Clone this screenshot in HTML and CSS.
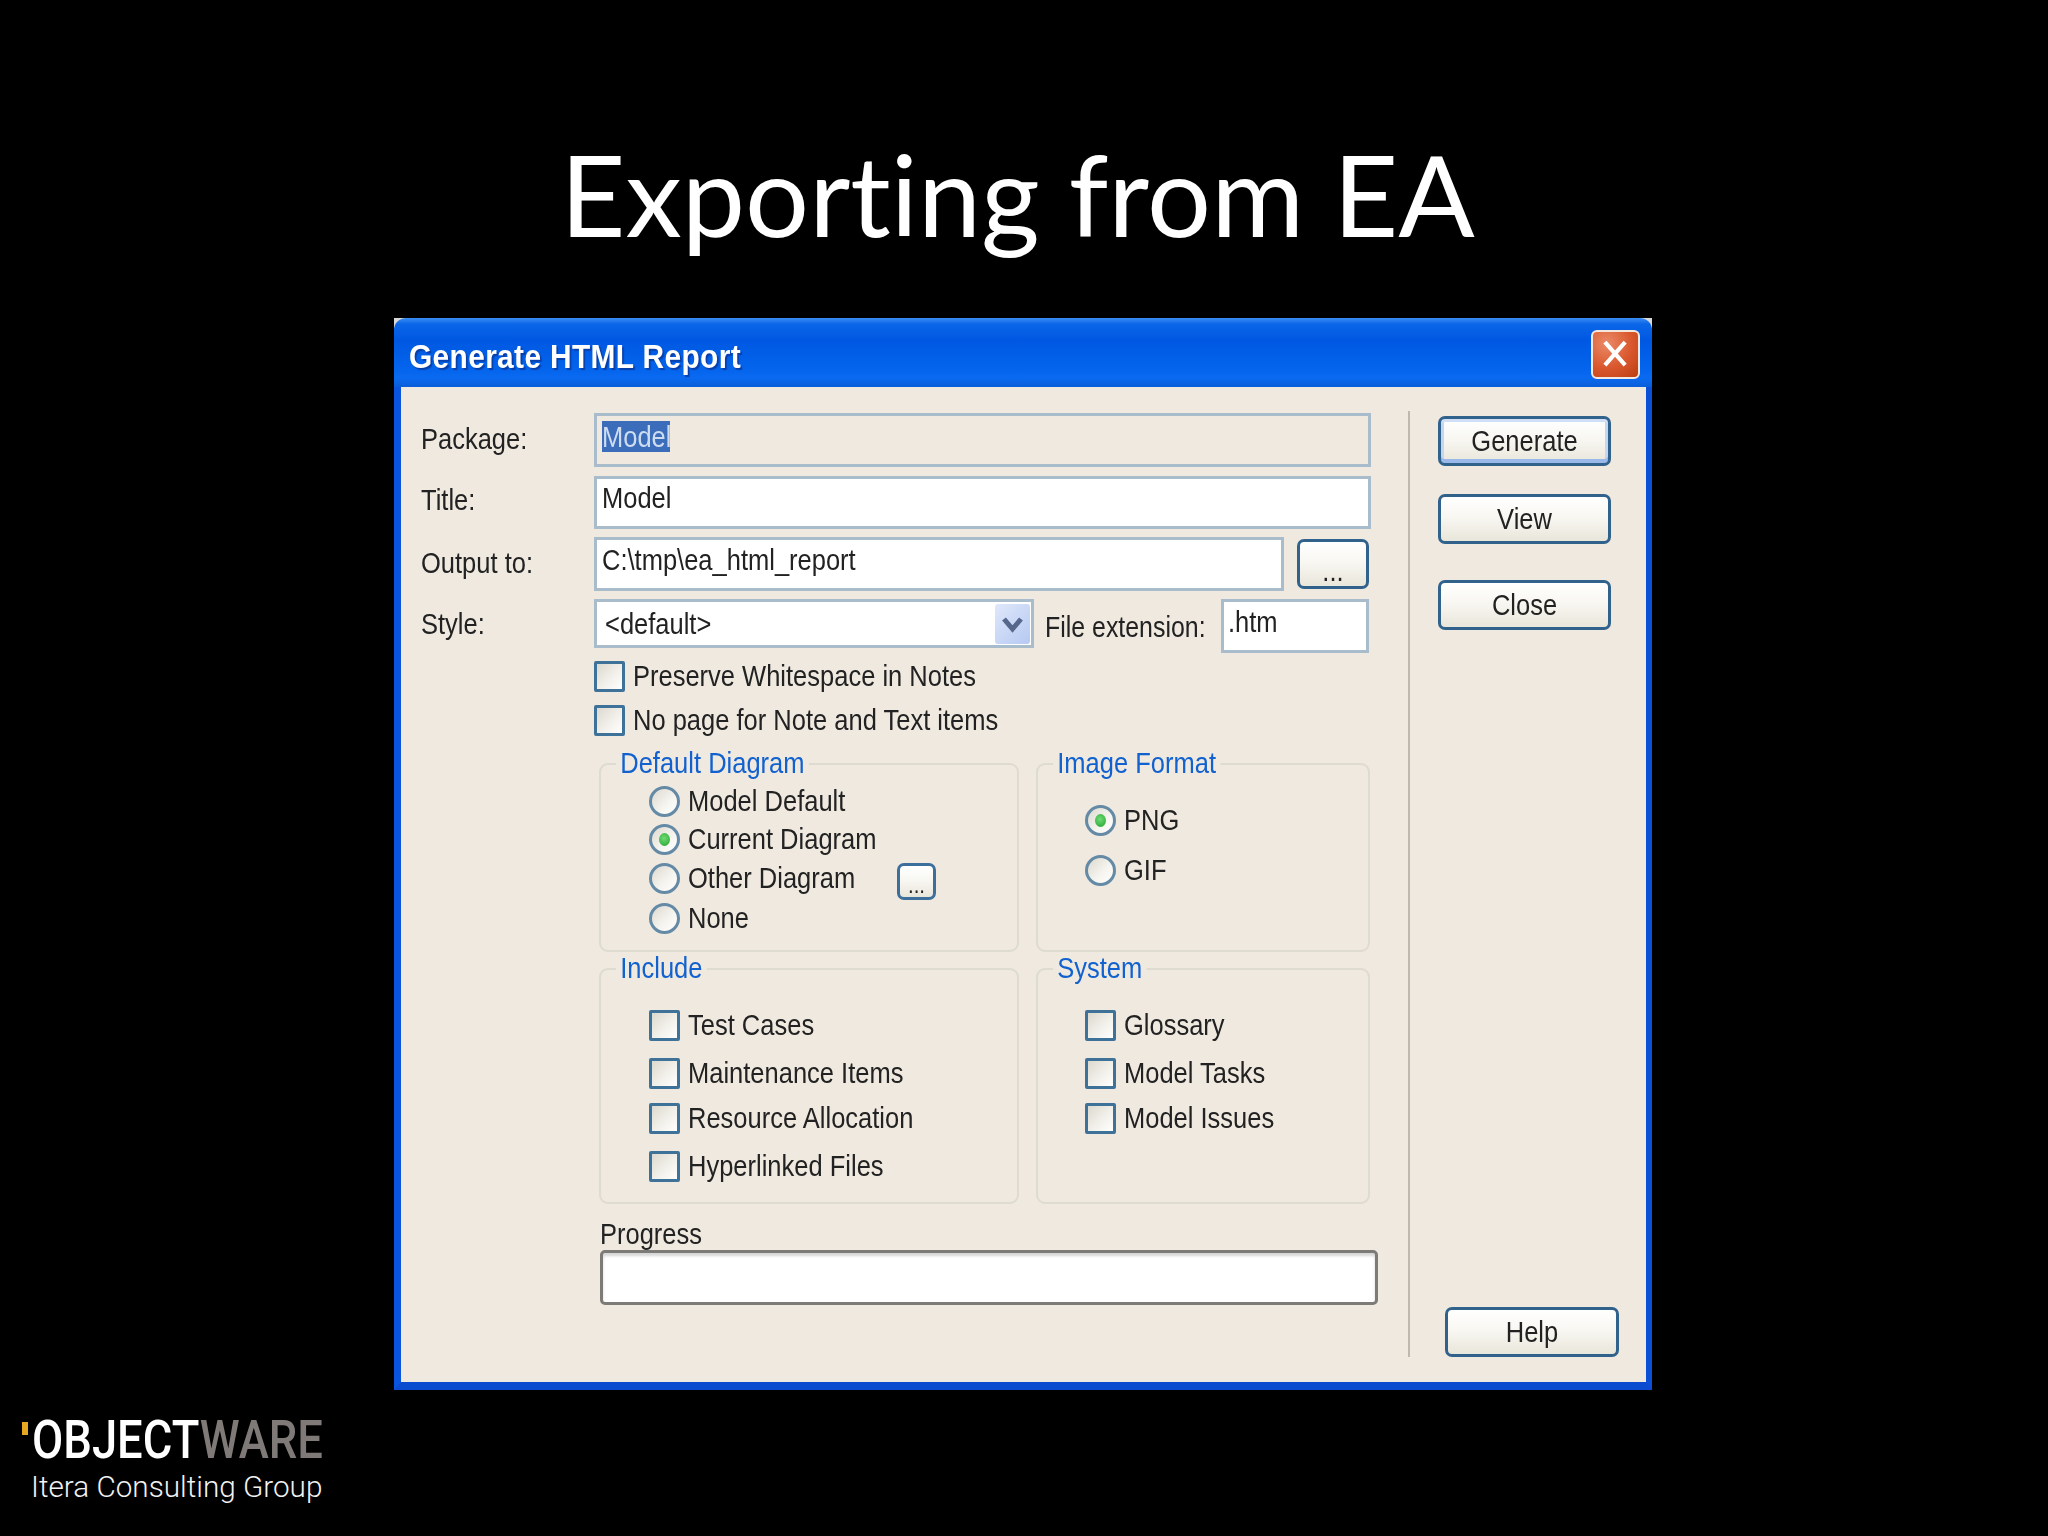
FILE: index.html
```html
<!DOCTYPE html>
<html lang="en">
<head>
<meta charset="utf-8">
<title>Exporting from EA</title>
<link rel="stylesheet" href="styles.css">
</head>
<body>
<div class="slide">
  <h1 class="slide-title">Exporting from EA</h1>
  <section class="dialog">
    <header class="titlebar">
      <span class="titlebar-text">Generate HTML Report</span>
      <span class="close-x"><svg viewBox="0 0 49 49" width="49" height="49"><path d="M13 11 L35 36 M35 11 L13 36" stroke="#fff" stroke-width="4.5" fill="none"/></svg></span>
    </header>
    <div class="client">
      <div class="main">
        <div class="row row-1"><label class="lbl">Package:</label><div class="field field-disabled"><span class="sel"><span class="sel-text">Model</span></span></div></div>
        <div class="row row-2"><label class="lbl">Title:</label><div class="field"><span class="val">Model</span></div></div>
        <div class="row row-3"><label class="lbl">Output to:</label><div class="field field-output"><span class="val">C:\tmp\ea_html_report</span></div><button class="btn btn-dots"><span class="btn-text">...</span></button></div>
        <div class="row row-4">
          <label class="lbl">Style:</label>
          <div class="combo"><span class="combo-val">&lt;default&gt;</span><span class="combo-arrow"><svg viewBox="0 0 35 40" width="35" height="40"><path d="M9 15 L17.5 25 L26 15" stroke="#55688c" stroke-width="5" fill="none"/></svg></span></div>
          <label class="lbl-ext">File extension:</label>
          <div class="field field-ext"><span class="val val-ext">.htm</span></div>
        </div>
        <div class="opts">
          <div class="opt opt-preserve"><span class="box"></span><span class="txt">Preserve Whitespace in Notes</span></div>
          <div class="opt"><span class="box"></span><span class="txt">No page for Note and Text items</span></div>
        </div>
        <div class="groups">
          <div class="group list-default">
            <span class="legend">Default Diagram</span>
            <div class="opt"><span class="radio"></span><span class="txt">Model Default</span></div>
            <div class="opt"><span class="radio on"></span><span class="txt">Current Diagram</span></div>
            <div class="opt opt-other"><span class="radio"></span><span class="txt">Other Diagram</span><button class="btn btn-dots-small"><span class="btn-text">...</span></button></div>
            <div class="opt"><span class="radio"></span><span class="txt">None</span></div>
          </div>
          <div class="group list-image">
            <span class="legend">Image Format</span>
            <div class="opt"><span class="radio on"></span><span class="txt">PNG</span></div>
            <div class="opt"><span class="radio"></span><span class="txt">GIF</span></div>
          </div>
          <div class="group list-checks">
            <span class="legend">Include</span>
            <div class="opt"><span class="box"></span><span class="txt">Test Cases</span></div>
            <div class="opt"><span class="box"></span><span class="txt">Maintenance Items</span></div>
            <div class="opt"><span class="box"></span><span class="txt">Resource Allocation</span></div>
            <div class="opt"><span class="box"></span><span class="txt">Hyperlinked Files</span></div>
          </div>
          <div class="group list-checks">
            <span class="legend">System</span>
            <div class="opt"><span class="box"></span><span class="txt">Glossary</span></div>
            <div class="opt"><span class="box"></span><span class="txt">Model Tasks</span></div>
            <div class="opt"><span class="box"></span><span class="txt">Model Issues</span></div>
          </div>
        </div>
        <div class="progress-wrap">
          <div class="progress-label">Progress</div>
          <div class="progress-bar"></div>
        </div>
      </div>
      <aside class="side">
        <button class="btn btn-side btn-default"><span class="btn-text">Generate</span></button>
        <button class="btn btn-side btn-view"><span class="btn-text">View</span></button>
        <button class="btn btn-side btn-close"><span class="btn-text">Close</span></button>
        <button class="btn btn-side btn-help"><span class="btn-text">Help</span></button>
      </aside>
    </div>
  </section>
  <footer class="logo">
    <div class="logo-line"><span class="logo-tick"></span><span class="logo-word"><span class="logo-a">OBJECT</span><span class="logo-b">WARE</span></span></div>
    <div class="logo-sub">Itera Consulting Group</div>
  </footer>
</div>
</body>
</html>
```
FILE: styles.css
```css
* { box-sizing: border-box; }
html, body { margin: 0; padding: 0; background: #000; }
.slide { width: 2048px; height: 1536px; background: #000; display: flex; flex-direction: column; overflow: hidden; }

.slide-title {
  margin: 133px 0 0;
  padding-right: 13px;
  height: 120px;
  line-height: 120px;
  text-align: center;
  font-family: "Lato", sans-serif;
  font-weight: 400;
  font-variant-ligatures: none;
  font-size: 113px;
  color: #fff;
}

.dialog {
  width: 1258px;
  height: 1072px;
  margin: 65px 0 0 394px;
  background: #d8d8d8;
  display: flex;
  flex-direction: column;
  font-family: "Liberation Sans", Arial, sans-serif;
  color: #1c1c1c;
  filter: blur(0.7px);
}
.titlebar {
  height: 69px;
  flex: none;
  display: flex;
  align-items: flex-start;
  justify-content: space-between;
  padding: 12px 12px 0 15px;
  border-radius: 12px 12px 0 0;
  background: linear-gradient(180deg, #3b8df2 0, #0b66e8 6px, #0058e2 22px, #0364ec 50px, #0a6af0 60px, #0a5ed8 69px);
}
.titlebar-text {
  font-weight: 700;
  font-size: 33px;
  line-height: 38px;
  margin-top: 8px;
  letter-spacing: 0.4px;
  color: #fff;
  text-shadow: 2px 2px 1px #0a3fa8;
  white-space: nowrap;
  transform: scaleX(0.905);
  transform-origin: left center;
}
.close-x {
  width: 49px;
  height: 49px;
  border: 2px solid #f4e7dd;
  border-radius: 6px;
  background: radial-gradient(circle at 30% 25%, #ea8a68, #d9572c 55%, #bd3e14);
  display: flex;
  align-items: center;
  justify-content: center;
  overflow: hidden;
}

.client {
  flex: 1;
  display: flex;
  background: #efe9e0;
  border-left: 7px solid #0a55e0;
  border-right: 6px solid #0a4fd4;
  border-bottom: 8px solid #0a4bd0;
}
.main {
  width: 1007px;
  flex: none;
  padding: 26px 0 0 20px;
}
.row { display: flex; align-items: flex-start; height: 54px; margin-bottom: 8px; }
.row-1 { margin-bottom: 9px; }
.row-2 { height: 53px; }

.lbl, .lbl-ext, .val, .sel-text, .combo-val, .txt, .legend, .progress-label, .btn-text {
  font-size: 30px;
  white-space: nowrap;
  color: #222;
  transform: scaleX(0.85);
  transform-origin: left center;
}
.lbl {
  width: 173px;
  flex: none;
  line-height: 32px;
  margin-top: 10px;
}
.row-2 .lbl { margin-top: 8px; }
.row-3 .lbl { margin-top: 10px; }
.row-4 .lbl { margin-top: 9px; }

.field {
  width: 777px;
  height: 100%;
  flex: none;
  background: #fff;
  border: 3px solid #a9bccb;
  padding: 5px 0 0 5px;
  line-height: 32px;
}
.field-disabled { background: #efe9e0; }
.field-output { width: 690px; }
.field-ext { width: 148px; margin-left: 18px; padding-left: 4px; }
.val { display: block; line-height: 32px; margin-top: -1px; }
.row-2 .val { margin-top: -2px; }
.sel {
  display: block;
  height: 31px;
  width: 68px;
  background: #3b6dba;
}
.sel-text { display: block; color: #cfdcf0; line-height: 31px; }

.combo {
  width: 440px;
  height: 49px;
  flex: none;
  background: #fff;
  border: 3px solid #a9bccb;
  display: flex;
  align-items: center;
  justify-content: space-between;
  padding: 0 1px 0 8px;
}
.combo-val { display: block; width: 200px; }
.combo-arrow {
  width: 35px;
  height: 40px;
  border-radius: 3px;
  background: linear-gradient(135deg, #dfe7fa, #b6c9f2);
  display: block;
}
.combo-arrow svg { display: block; }
.lbl-ext {
  line-height: 32px;
  margin: 12px 0 0 11px;
  flex: none;
  width: 158px;
  transform: scaleX(0.83);
}

.opts { display: flex; flex-direction: column; padding-left: 173px; }
.opt { display: flex; align-items: flex-start; height: 31px; }
.opt-preserve { margin-bottom: 13px; }
.txt {
  line-height: 31px;
  margin: -1px 0 0 8px;
}
.box {
  width: 31px;
  height: 31px;
  flex: none;
  border: 3px solid #3f7298;
  border-radius: 2px;
  background: linear-gradient(135deg, #dcd9cf, #f2f0ea 55%, #fff);
}
.radio {
  width: 31px;
  height: 31px;
  flex: none;
  border: 3px solid #648aa6;
  border-radius: 50%;
  background: linear-gradient(135deg, #dcd9cf, #f6f5f0 60%, #fff);
  display: flex;
  align-items: center;
  justify-content: center;
}
.radio.on::after {
  content: "";
  width: 11px;
  height: 13px;
  border-radius: 50%;
  background: radial-gradient(circle at 45% 40%, #6fdc74, #22a02e);
}

.groups {
  display: grid;
  grid-template-columns: 420px 334px;
  grid-template-rows: 189px 236px;
  column-gap: 17px;
  row-gap: 16px;
  margin: 27px 0 0 178px;
}
.group {
  position: relative;
  display: grid;
  border: 2px solid #dedbd0;
  border-radius: 9px;
  align-content: start;
}
.legend {
  position: absolute;
  top: -17px;
  left: 15px;
  padding: 0 5px;
  background: #efe9e0;
  line-height: 30px;
  color: #1161cf;
}
.list-default { padding: 21px 0 0 48px; grid-template-rows: 38px 39px 40px 31px; }
.list-image { padding: 40px 0 0 47px; grid-template-rows: 50px 31px; }
.list-checks { padding: 40px 0 0 48px; grid-template-rows: 48px 45px 48px 31px; }
.list-checks:last-child { padding-left: 47px; }
.opt-other .txt { width: 209px; }

.btn {
  font-family: "Liberation Sans", Arial, sans-serif;
  padding: 0;
  border: 3px solid #30628c;
  border-radius: 7px;
  background: linear-gradient(180deg, #fff 0, #f8f7f2 45%, #e9e6da 100%);
}
.btn-text { display: block; transform-origin: center; }
.btn-dots { width: 72px; height: 50px; margin: 2px 0 0 13px; line-height: 58px; }
.btn-dots-small {
  width: 39px;
  height: 37px;
  flex: none;
  line-height: 38px;
  margin-left: 0;
  border-color: #3c6f9c;
}
.btn-dots-small .btn-text { font-size: 24px; }

.progress-wrap { margin: 14px 0 0 179px; }
.progress-label { line-height: 31px; }
.progress-bar {
  width: 778px;
  height: 55px;
  margin-top: 1px;
  background: #fff;
  border: 3px solid #7d7b77;
  border-radius: 5px;
  box-shadow: inset 0 3px 3px #d6d6d6;
}

.side {
  flex: none;
  width: 211px;
  height: 946px;
  margin-top: 24px;
  border-left: 2px solid #bdb9ae;
  display: flex;
  flex-direction: column;
  align-items: flex-start;
  padding: 5px 0 0 28px;
}
.btn-side { width: 173px; height: 50px; flex: none; }
.btn-default {
  box-shadow: inset 0 3px 0 #d0dff5, inset 0 -4px 0 #9ab9ea, inset 3px 0 0 #c4d6f2, inset -3px 0 0 #c4d6f2;
}
.btn-view { margin-top: 28px; }
.btn-close { margin-top: 36px; }
.btn-help { margin: auto 0 0 7px; width: 174px; }

.logo { margin: 24px 0 0 22px; color: #fff; }
.logo-line { display: flex; align-items: flex-start; height: 50px; }
.logo-tick { width: 6px; height: 13px; margin: 8px 4px 0 0; background: #e6a821; flex: none; }
.logo-word {
  display: block;
  font-family: "Roboto", sans-serif;
  font-size: 54px;
  line-height: 52px;
  font-weight: 500;
  transform: scaleX(0.84);
  transform-origin: left top;
  white-space: nowrap;
}
.logo-a { color: #fff; }
.logo-b { color: #7f7a77; }
.logo-sub {
  margin: 5px 0 0 9px;
  font-family: "Roboto", sans-serif;
  font-size: 29.7px;
  line-height: 36px;
  font-weight: 300;
  white-space: nowrap;
  color: #f2f2f2;
}
```
